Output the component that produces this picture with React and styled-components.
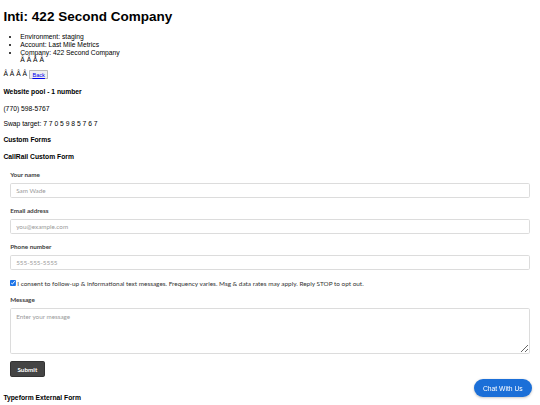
import React from "react";
import styled, { createGlobalStyle } from "styled-components";

const Global = createGlobalStyle`
  html { zoom: 0.421875; }
  body {
    margin: 8px;
    font-family: "Liberation Sans", Arial, sans-serif;
    font-size: 16px;
    color: #000;
    background: #fff;
    overflow-x: hidden;
  }
`;

const Title = styled.h1`
  font-size: 32px;
  font-weight: bold;
  margin: 14px 0 21.44px;
`;

const InfoList = styled.ul`
  margin: 16px 0;
  padding-left: 40px;
  line-height: 18px;
`;

const Line = styled.div`
  margin: 16px 0 18px;
  line-height: 18px;
`;

const BackButton = styled.button`
  font-family: "Liberation Sans", Arial, sans-serif;
  font-size: 13.33px;
  padding: 1px 6px;
  background: #efefef;
  border: 1px solid #b9b9b9;
  border-radius: 2px;
  vertical-align: middle;
  a { color: #0000ee; text-decoration: underline; }
`;

const SectionTitle = styled.h4`
  font-size: 16px;
  font-weight: bold;
  margin: 21.28px 0;
  line-height: 18.4px;
`;

const Para = styled.p`
  margin: 16px 0;
  line-height: 18.4px;
`;

const FormWrap = styled.form`
  padding: 3px 16px 19px;
  font-family: Lato, "Open Sans", sans-serif;
  font-size: 15px;
`;

const Field = styled.div`
  margin-bottom: ${(p) => p.$gap || 20}px;
`;

const Label = styled.label`
  display: block;
  font-weight: 700;
  font-size: 15px;
  line-height: 20px;
  color: #3d3d3d;
  margin-bottom: 8px;
`;

const Input = styled.input`
  display: block;
  box-sizing: border-box;
  width: 100%;
  height: 37px;
  padding: 8px 12px;
  border: 1px solid #dcdcdc;
  border-radius: 4px;
  font-family: Lato, "Open Sans", sans-serif;
  font-size: 15px;
  color: #333;
  &::placeholder { color: #9a9a9a; }
`;

const TextArea = styled.textarea`
  display: block;
  box-sizing: border-box;
  width: 100%;
  height: 109px;
  padding: 10px 12px;
  border: 1px solid #dcdcdc;
  border-radius: 4px;
  font-family: Lato, "Open Sans", sans-serif;
  font-size: 15px;
  &::placeholder { color: #9a9a9a; }
`;

const Consent = styled.label`
  display: flex;
  align-items: center;
  gap: 4px;
  line-height: 22px;
  font-size: 15.2px;
  color: #333;
  margin-bottom: 20px;
  input { margin: 0; width: 13px; height: 13px; accent-color: #1a73e8; }
`;

const SubmitButton = styled.button`
  height: 38px;
  padding: 0 15px;
  background: #444;
  color: #fff;
  border: 1px solid #333;
  border-radius: 4px;
  font-family: Lato, "Open Sans", sans-serif;
  font-size: 15px;
  font-weight: 700;
`;

const ChatButton = styled.button`
  position: fixed;
  right: 20px;
  bottom: 20px;
  padding: 12px 21px;
  border: none;
  border-radius: 22px;
  background: #1b6fd8;
  color: #fff;
  font-family: "Liberation Sans", Arial, sans-serif;
  font-size: 16px;
  box-shadow: 0 2px 6px rgba(0, 0, 0, 0.25);
`;

export default function App() {
  return (
    <>
      <Global />
      <Title>Inti: 422 Second Company</Title>
      <InfoList>
        <li>Environment: staging</li>
        <li>Account: Last Mile Metrics</li>
        <li>
          Company: 422 Second Company
          <br />Â Â Â Â
        </li>
      </InfoList>
      <Line>
        Â Â Â Â{" "}
        <BackButton type="button">
          <a href="#back">Back</a>
        </BackButton>
      </Line>
      <SectionTitle>Website pool - 1 number</SectionTitle>
      <Para>(770) 598-5767</Para>
      <Para>Swap target: 7 7 0 5 9 8 5 7 6 7</Para>
      <SectionTitle>Custom Forms</SectionTitle>
      <SectionTitle>CallRail Custom Form</SectionTitle>
      <FormWrap onSubmit={(e) => e.preventDefault()}>
        <Field>
          <Label>Your name</Label>
          <Input placeholder="Sam Wade" />
        </Field>
        <Field>
          <Label>Email address</Label>
          <Input placeholder="you@example.com" />
        </Field>
        <Field>
          <Label>Phone number</Label>
          <Input placeholder="555-555-5555" />
        </Field>
        <Consent>
          <input type="checkbox" defaultChecked />
          I consent to follow-up &amp; informational text messages. Frequency varies. Msg &amp; data rates may apply. Reply STOP to opt out.
        </Consent>
        <Field $gap={17}>
          <Label>Message</Label>
          <TextArea placeholder="Enter your message" />
        </Field>
        <SubmitButton type="submit">Submit</SubmitButton>
      </FormWrap>
      <SectionTitle>Typeform External Form</SectionTitle>
      <ChatButton type="button">Chat With Us</ChatButton>
    </>
  );
}
